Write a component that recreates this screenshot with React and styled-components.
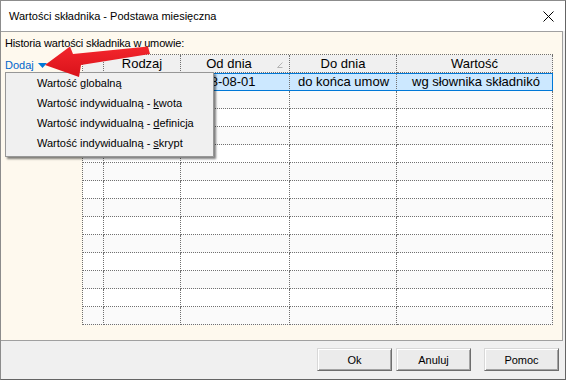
import React from "react";
import styled, { createGlobalStyle } from "styled-components";

const FONT = `"Liberation Sans", Arial, sans-serif`;

const GlobalStyle = createGlobalStyle`
  html, body { margin: 0; padding: 0; background: #fff; }
  body { font-family: ${FONT}; }
  * { box-sizing: border-box; }
`;

const Window = styled.div`
  position: relative;
  width: 566px;
  height: 380px;
  border: 1px solid #8c8c8c;
  border-right-color: #646464;
  border-bottom-color: #646464;
  background: #f0f0f0;
  display: flex;
  flex-direction: column;
  overflow: hidden;
  font-family: ${FONT};
  color: #000;
`;

const TitleBar = styled.div`
  flex: none;
  height: 30px;
  background: #fff;
  display: flex;
  align-items: center;
  justify-content: space-between;
  padding: 0 11px 0 8px;
  font-size: 11px;
`;

const Panel = styled.div`
  flex: none;
  height: 310px;
  margin-right: 2px;
  background: #fef9ee;
  border: 1px solid #a0a0a0;
  border-left: none;
  padding: 5px 9px 0 4px;
  display: flex;
  flex-direction: column;
  gap: 4px;
`;

const Label = styled.div`
  font-size: 11px;
  line-height: 13px;
  height: 13px;
  letter-spacing: -0.15px;
`;

const Body = styled.div`
  display: flex;
`;

const LeftCol = styled.div`
  width: 77px;
  padding-top: 1px;
`;

const AddLink = styled.a`
  display: inline-flex;
  align-items: center;
  gap: 4px;
  font-size: 11px;
  line-height: 13px;
  color: #0066cc;
  border-bottom: 1px solid #0078d7;
  text-decoration: none;
  cursor: pointer;
`;

const Grid = styled.div`
  width: 471px;
  border-left: 1px dotted #707070;
  border-top: 1px dotted #707070;
  display: flex;
  flex-direction: column;
`;

const rowBg = (p) =>
  p.$header ? "#f0f0f0" : p.$selected ? "#cce8ff" : p.$alt ? "#fafafa" : "#fff";

const Row = styled.div`
  display: grid;
  grid-template-columns: 21px 77px 109px 107px 156px;
  height: 18px;
  background: ${rowBg};
  ${(p) =>
    p.$selected
      ? `outline: 1px solid #0078d7; outline-offset: -1px; position: relative; z-index: 1;`
      : ""}
`;

const Cell = styled.div`
  height: 18px;
  border-right: 1px dotted #707070;
  border-bottom: 1px dotted #707070;
  font-size: 13px;
  line-height: 17px;
  white-space: nowrap;
  overflow: hidden;
  padding-left: ${(p) => p.$pad || 0}px;
`;

const HeadCell = styled(Cell)`
  display: flex;
  align-items: center;
`;

const HeadText = styled.span`
  flex: 1;
  text-align: center;
`;

const SortMark = styled.svg`
  flex: none;
  margin-right: 6px;
  margin-top: 2px;
`;

const Footer = styled.div`
  flex: 1;
  display: flex;
  justify-content: flex-end;
  align-items: flex-start;
  gap: 13px;
  padding: 7px 6px 0 0;
`;

const ButtonGroup = styled.div`
  display: flex;
  gap: 4px;
`;

const Button = styled.button`
  width: 75px;
  height: 23px;
  padding: 0;
  font-family: ${FONT};
  font-size: 11px;
  color: #000;
  background: #ebebeb;
  border: 1px solid;
  border-color: #d8d8d8 #6e6e6e #6e6e6e #d8d8d8;
  box-shadow: inset 1px 1px 0 #fff, inset -1px -1px 0 #a3a3a3;
`;

const Menu = styled.div`
  position: absolute;
  left: 4px;
  top: 71px;
  width: 209px;
  height: 85px;
  background: #f0f0f0;
  border: 1px solid #979797;
  box-shadow: 2px 2px 2px rgba(0, 0, 0, 0.5);
  padding: 0 0 2px 0;
  z-index: 5;
`;

const MenuItem = styled.div`
  height: 20px;
  line-height: 20px;
  padding-left: 31px;
  font-size: 11px;
  white-space: nowrap;
`;

const ArrowSvg = styled.svg`
  position: absolute;
  left: -1px;
  top: -1px;
  z-index: 6;
  pointer-events: none;
`;

const header = ["", "Rodzaj", "Od dnia", "Do dnia", "Wartość"];

const menuItems = [
  ["Wartość ", "g", "lobalną"],
  ["Wartość indywidualną - ", "k", "wota"],
  ["Wartość indywidualną - ", "d", "efinicja"],
  ["Wartość indywidualną - ", "s", "krypt"],
];

export default function App() {
  const emptyRows = Array.from({ length: 13 }, (_, i) => i + 2);
  return (
    <>
      <GlobalStyle />
      <Window>
        <TitleBar>
          <span>Wartości składnika - Podstawa miesięczna</span>
          <svg width="11" height="11" viewBox="0 0 11 11">
            <path d="M0.5 0.5 L10.5 10.5 M10.5 0.5 L0.5 10.5" stroke="#000" strokeWidth="1" />
          </svg>
        </TitleBar>
        <Panel>
          <Label>Historia wartości składnika w umowie:</Label>
          <Body>
            <LeftCol>
              <AddLink>
                Dodaj
                <svg width="9" height="5" viewBox="0 0 9 5">
                  <path d="M0 0 H9 L4.5 5 Z" fill="#0078d7" />
                </svg>
              </AddLink>
            </LeftCol>
            <Grid>
              <Row $header>
                {header.map((h, i) =>
                  i === 2 ? (
                    <HeadCell key={i}>
                      <HeadText>{h}</HeadText>
                      <SortMark width="6" height="6" viewBox="0 0 6 6">
                        <path d="M5.5 0.5 L0.5 5.5 H5.5" fill="none" stroke="#b4b4b4" strokeWidth="1" />
                      </SortMark>
                    </HeadCell>
                  ) : (
                    <HeadCell key={i}>
                      <HeadText>{h}</HeadText>
                    </HeadCell>
                  )
                )}
              </Row>
              <Row $selected>
                <Cell />
                <Cell />
                <Cell $pad={8}>2018-08-01</Cell>
                <Cell $pad={8}>do końca umow</Cell>
                <Cell $pad={15}>wg słownika składnikó</Cell>
              </Row>
              {emptyRows.map((n) => (
                <Row key={n} $alt={n % 2 === 0}>
                  <Cell />
                  <Cell />
                  <Cell />
                  <Cell />
                  <Cell />
                </Row>
              ))}
            </Grid>
          </Body>
        </Panel>
        <Footer>
          <ButtonGroup>
            <Button>Ok</Button>
            <Button>Anuluj</Button>
          </ButtonGroup>
          <Button>Pomoc</Button>
        </Footer>
        <Menu>
          {menuItems.map(([a, u, b], i) => (
            <MenuItem key={i}>
              {a}
              <u>{u}</u>
              {b}
            </MenuItem>
          ))}
        </Menu>
        <ArrowSvg width="160" height="80" viewBox="0 0 160 80">
          <defs>
            <linearGradient id="redg" x1="0" y1="0" x2="0" y2="1">
              <stop offset="0" stopColor="#f3262c" />
              <stop offset="1" stopColor="#d9121a" />
            </linearGradient>
          </defs>
          <path
            d="M45 65 L70 46.5 L73 54 L148 46.5 L150 54 L81 65 L79 77 Z"
            fill="url(#redg)"
          />
        </ArrowSvg>
      </Window>
    </>
  );
}
